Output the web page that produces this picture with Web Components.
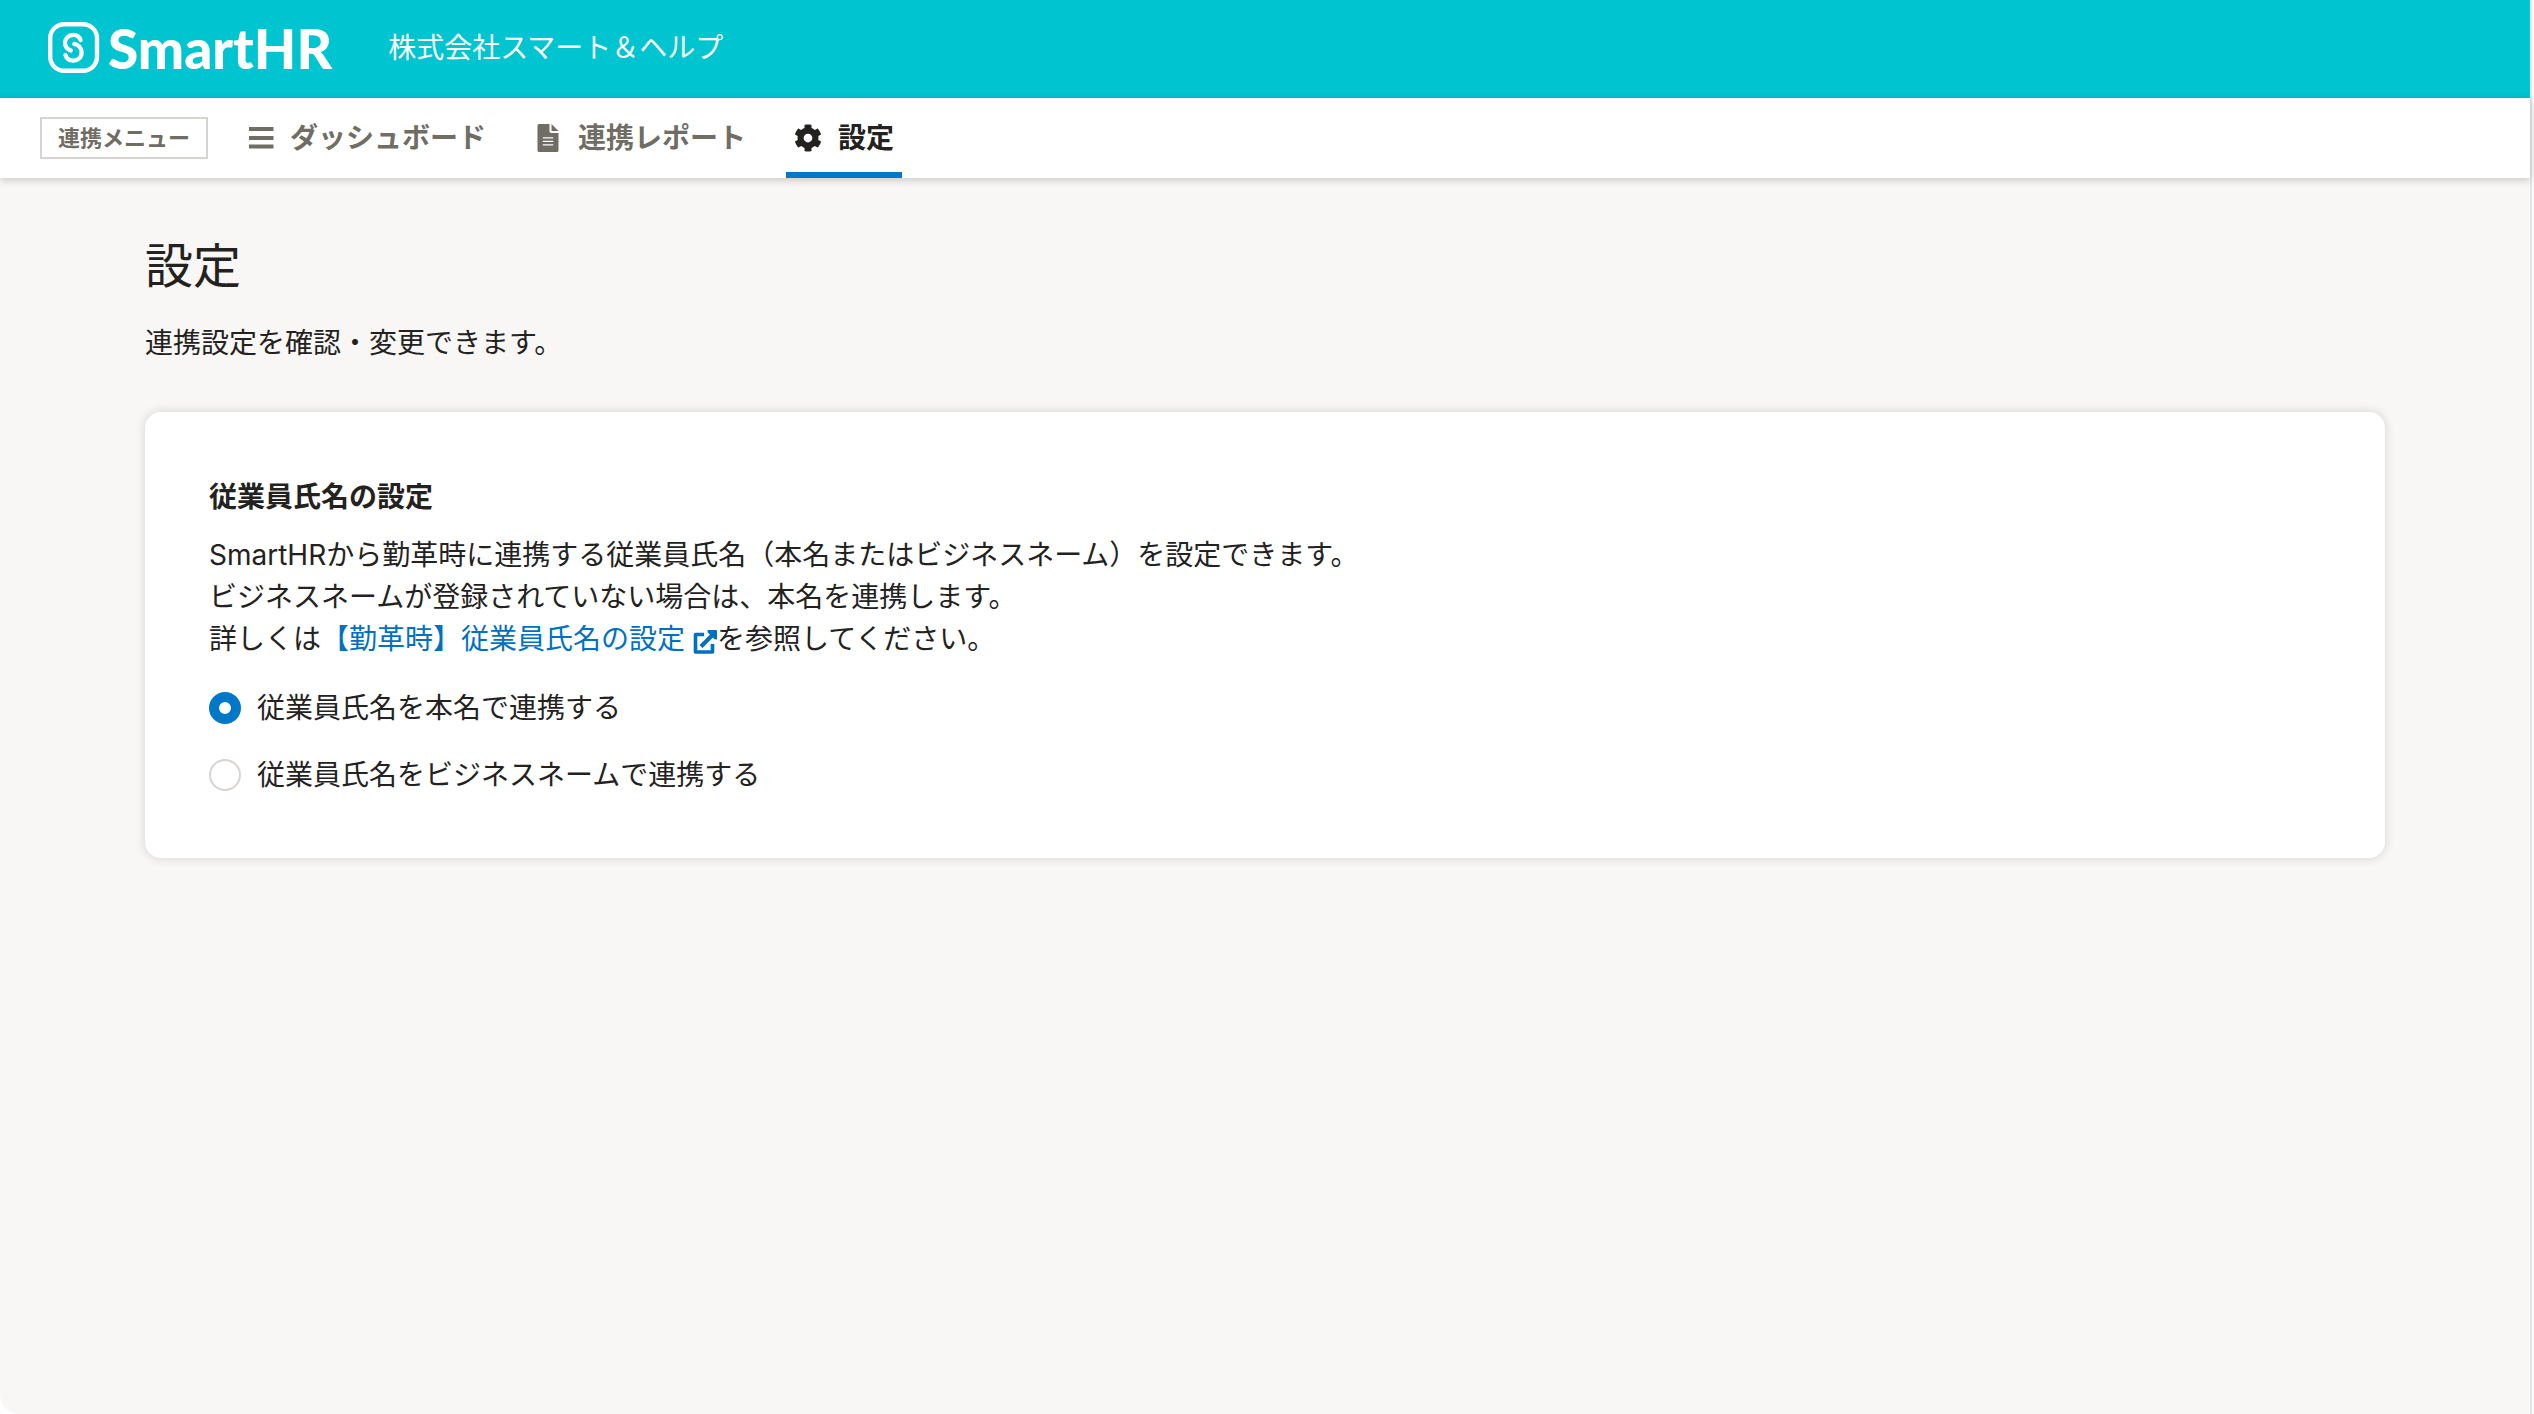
<!DOCTYPE html>
<html lang="ja">
<head>
<meta charset="utf-8">
<meta name="viewport" content="width=device-width, initial-scale=1">
<title>設定</title>
<style>
  html { background: #fff; }
  body {
    margin: 0;
    font: 28px/42px Inter, "Noto Sans CJK JP", sans-serif;
    color: #23221e;
  }
</style>
</head>
<body>
<app-shell>
  <app-header slot="header" company="株式会社スマート＆ヘルプ"></app-header>
  <app-nav slot="nav" label="連携メニュー">
    <nav-item icon="bars" href="#dashboard">ダッシュボード</nav-item>
    <nav-item icon="file" href="#report">連携レポート</nav-item>
    <nav-item icon="gear" href="#settings" current>設定</nav-item>
  </app-nav>
  <page-heading>
    設定
    <span slot="lead">連携設定を確認・変更できます。</span>
  </page-heading>
  <base-card>
    <span slot="title">従業員氏名の設定</span>
    SmartHRから勤革時に連携する従業員氏名（本名またはビジネスネーム）を設定できます。<br>
    ビジネスネームが登録されていない場合は、本名を連携します。<br>
    詳しくは<text-link href="#help">【勤革時】従業員氏名の設定</text-link>を参照してください。
    <radio-group slot="form" name="employee-name" label="従業員氏名の設定"
      options="従業員氏名を本名で連携する|従業員氏名をビジネスネームで連携する"></radio-group>
  </base-card>
</app-shell>

<script>
const ICONS = {
  bars: '<svg viewBox="0 0 28 28"><path fill="currentColor" d="M3 3h24.500v4H3zM3 12h24.500v4H3zM3 20.500h24.500v4H3z"/></svg>',
  file: '<svg viewBox="0 0 28 28"><path fill="currentColor" fill-rule="evenodd" d="M5 0H15.500V7.200Q15.500 9 17.300 9H24.500V26.500Q24.500 28 23 28H5Q3.500 28 3.500 26.500V1.500Q3.500 0 5 0ZM8.800 13.200V14.500H19.200V13.200ZM8.800 16.700V18H19.200V16.700ZM8.800 20.200V21.500H19.200V20.200Z"/><path fill="currentColor" d="M17.500 0L24.500 7H17.500Z"/></svg>',
  gear: '<svg viewBox="0 0 512 512"><path fill="currentColor" d="M487.400 315.700l-42.600-24.600c4.300-23.200 4.300-47 0-70.200l42.600-24.600c4.900-2.800 7.100-8.600 5.500-14-11.100-35.600-30-67.800-54.700-94.600-3.800-4.100-10-5.100-14.800-2.300L380.800 110c-17.900-15.400-38.500-27.300-60.800-35.100V25.800c0-5.600-3.900-10.500-9.400-11.700-36.700-8.200-74.300-7.800-109.200 0-5.500 1.200-9.400 6.100-9.400 11.700V75c-22.200 7.900-42.800 19.800-60.800 35.100L88.700 85.500c-4.900-2.800-11-1.900-14.800 2.300-24.700 26.700-43.600 58.900-54.700 94.600-1.700 5.400.6 11.200 5.500 14L67.300 221c-4.300 23.200-4.300 47 0 70.200l-42.600 24.600c-4.900 2.800-7.100 8.600-5.500 14 11.100 35.600 30 67.800 54.700 94.600 3.800 4.100 10 5.100 14.800 2.300l42.600-24.600c17.900 15.400 38.500 27.300 60.800 35.100v49.200c0 5.600 3.900 10.500 9.400 11.700 36.700 8.200 74.300 7.800 109.200 0 5.500-1.200 9.400-6.100 9.400-11.700v-49.200c22.200-7.900 42.800-19.800 60.800-35.100l42.600 24.600c4.900 2.800 11 1.900 14.800-2.300 24.700-26.700 43.600-58.900 54.700-94.600 1.500-5.500-.7-11.300-5.600-14.100zM256 336c-44.100 0-80-35.900-80-80s35.900-80 80-80 80 35.900 80 80-35.900 80-80 80z"/></svg>'
};

class AppShell extends HTMLElement {
  constructor() {
    super();
    this.attachShadow({ mode: 'open' }).innerHTML = `
      <style>
        :host { display: flex; min-height: 100vh; }
        .app { flex: 1; min-width: 0; background: #f8f7f5; border-bottom-left-radius: 20px; }
        .gutter { box-sizing: border-box; width: 4px; background: #fafafa; border-left: 2px solid #e6e6e6; }
        main { padding: 52px 145px; }
      </style>
      <div class="app">
        <slot name="header"></slot>
        <slot name="nav"></slot>
        <main><slot></slot></main>
      </div>
      <div class="gutter"></div>`;
  }
}

class AppHeader extends HTMLElement {
  connectedCallback() {
    this.attachShadow({ mode: 'open' }).innerHTML = `
      <style>
        :host { display: block; background: #00c4cf; color: #fff; }
        header { display: flex; align-items: center; gap: 56px; height: 98px; padding: 0 48px 2px; box-sizing: border-box; }
        a { display: flex; align-items: center; gap: 8px; color: inherit; text-decoration: none; font: 900 55px/96px Lato, sans-serif; }
        svg { width: 52px; height: 52px; }
        p { margin: 0; }
      </style>
      <header>
        <a href="#home">
          <svg viewBox="0 0 52 52" fill="none" stroke="#fff" aria-hidden="true">
            <rect x="2.200" y="2.200" width="46.800" height="46.600" rx="14" stroke-width="4.400"/>
            <g stroke-width="4.200" stroke-linecap="round">
              <path d="M32.600 18.100C31.400 14.500 28.500 12.700 25.300 12.800C20.500 12.900 17 16.500 17 20.800C17 25.500 20 27.500 22.800 28.500"/>
              <path d="M26.300 21.900C30 22.700 33.600 25.500 33.600 30.500C33.600 35.500 29.800 38.700 25.300 38.700C21.500 38.700 18.500 36.500 17.400 32.900"/>
            </g>
          </svg>
          <span>SmartHR</span>
        </a>
        <p>${this.getAttribute('company')}</p>
      </header>`;
  }
}

class AppNav extends HTMLElement {
  connectedCallback() {
    this.attachShadow({ mode: 'open' }).innerHTML = `
      <style>
        :host { display: block; position: relative; background: #fff; box-shadow: 0 2px 8px rgba(3, 3, 2, .2); }
        nav { display: flex; align-items: center; gap: 30px; height: 80px; padding: 0 40px; box-sizing: border-box; }
        button { padding: 0 16px; border: 2px solid #d6d3d0; background: #fff; color: #706d65; font: 700 22px/38px Inter, "Noto Sans CJK JP", sans-serif; }
        .items { display: flex; gap: 32px; align-self: stretch; }
      </style>
      <nav>
        <button type="button">${this.getAttribute('label')}</button>
        <div class="items"><slot></slot></div>
      </nav>`;
  }
}

class NavItem extends HTMLElement {
  connectedCallback() {
    const current = this.hasAttribute('current');
    this.attachShadow({ mode: 'open' }).innerHTML = `
      <style>
        :host { display: flex; color: #706d65; font-weight: 700; }
        :host([current]) { color: #23221e; }
        a { display: flex; align-items: center; gap: 16px; padding: 6px 8px 0; border-bottom: 6px solid transparent; color: inherit; text-decoration: none; }
        :host([current]) a { border-color: #0077c7; }
        svg { display: block; width: 28px; height: 28px; }
      </style>
      <a href="${this.getAttribute('href')}"${current ? ' aria-current="page"' : ''}>${ICONS[this.getAttribute('icon')]}<span><slot></slot></span></a>`;
  }
}

class PageHeading extends HTMLElement {
  constructor() {
    super();
    this.attachShadow({ mode: 'open' }).innerHTML = `
      <style>
        :host { display: block; margin-bottom: 48px; }
        h1 { margin: 0 0 20px; font-weight: 400; font-size: 48px; line-height: 72px; }
        p { margin: 0; }
      </style>
      <h1><slot></slot></h1>
      <p><slot name="lead"></slot></p>`;
  }
}

class BaseCard extends HTMLElement {
  constructor() {
    super();
    this.attachShadow({ mode: 'open' }).innerHTML = `
      <style>
        :host { display: block; padding: 64px; border-radius: 16px; background: #fff; box-shadow: 0 0 8px 2px rgba(3, 3, 2, .1); }
        h2 { margin: 0 0 16px; font-size: 28px; line-height: 42px; }
        p { margin: 0 0 29px; }
      </style>
      <h2><slot name="title"></slot></h2>
      <p><slot></slot></p>
      <slot name="form"></slot>`;
  }
}

class TextLink extends HTMLElement {
  connectedCallback() {
    this.attachShadow({ mode: 'open' }).innerHTML = `<style>
        :host { display: inline; }
        a { color: #0071c1; text-decoration: none; }
        svg { width: 24px; height: 24px; margin-left: 8px; vertical-align: -5px; }
      </style><a href="${this.getAttribute('href')}"><slot></slot><svg viewBox="0 0 24 24" fill="none" stroke="currentColor" aria-hidden="true"><path stroke-width="3.600" stroke-linejoin="round" d="M11 4.500H2.500V22H19.500V14"/><path stroke-width="4" d="M8 16.500L20 4.500"/><path fill="currentColor" stroke="none" d="M14.500 0H23Q24 0 24 1V9.500L21.500 9.200L14.800 2.500Z"/></svg></a>`;
  }
}

class RadioGroup extends HTMLElement {
  connectedCallback() {
    const name = this.getAttribute('name');
    const rows = this.getAttribute('options').split('|').map((text, i) => `
      <div class="row">
        <input type="radio" id="${name}-${i}" name="${name}" value="${i}"${i === 0 ? ' checked' : ''}>
        <label for="${name}-${i}">${text}</label>
      </div>`).join('');
    this.attachShadow({ mode: 'open' }).innerHTML = `
      <style>
        :host { display: block; }
        .group { display: flex; flex-direction: column; gap: 29px; }
        .row { display: flex; align-items: center; gap: 16px; line-height: 38px; }
        input { appearance: none; box-sizing: border-box; width: 32px; height: 32px; margin: 0; border: 2px solid #d6d3d0; border-radius: 50%; background: #fff; }
        input:checked { border: 10px solid #0077c7; }
      </style>
      <div class="group" role="radiogroup" aria-label="${this.getAttribute('label')}">${rows}</div>`;
  }
}

customElements.define('app-shell', AppShell);
customElements.define('app-header', AppHeader);
customElements.define('app-nav', AppNav);
customElements.define('nav-item', NavItem);
customElements.define('page-heading', PageHeading);
customElements.define('base-card', BaseCard);
customElements.define('text-link', TextLink);
customElements.define('radio-group', RadioGroup);
</script>
</body>
</html>
